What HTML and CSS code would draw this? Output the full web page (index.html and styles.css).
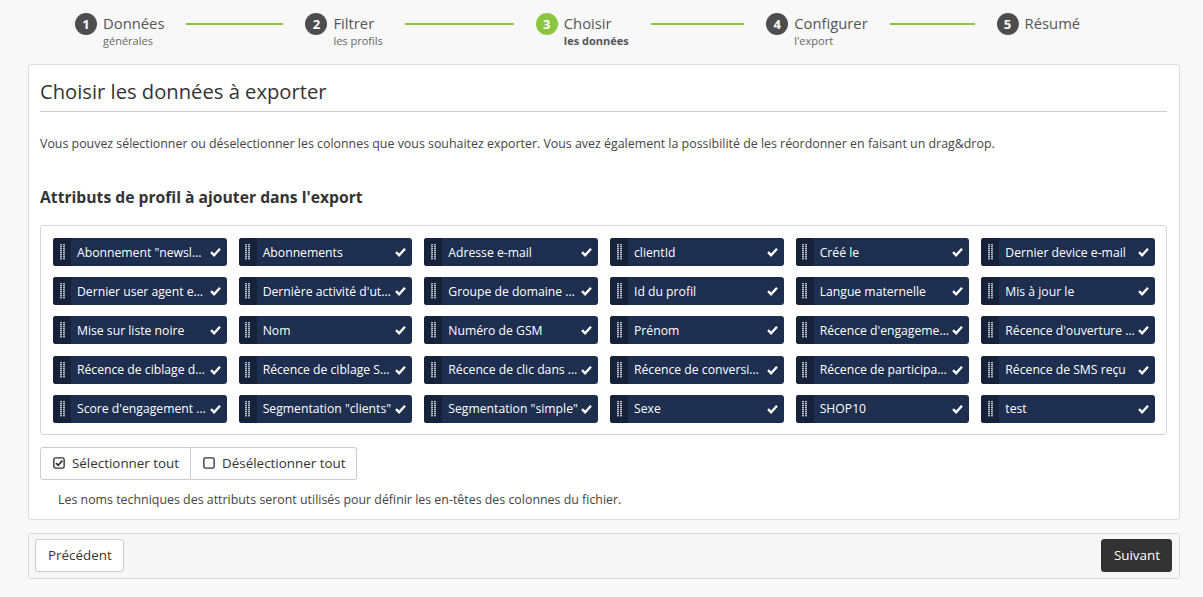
FILE: index.html
```html
<!DOCTYPE html>
<html lang="fr">
<head>
<meta charset="utf-8">
<title>Export</title>
<link rel="stylesheet" href="styles.css">
</head>
<body>
<ol class="stepper">
  <li class="step"><span class="num">1</span><span class="labels"><span class="t">Données</span><span class="s">générales</span></span><span class="line"></span></li>
  <li class="step"><span class="num">2</span><span class="labels"><span class="t">Filtrer</span><span class="s">les profils</span></span><span class="line"></span></li>
  <li class="step active"><span class="num">3</span><span class="labels"><span class="t">Choisir</span><span class="s">les données</span></span><span class="line"></span></li>
  <li class="step"><span class="num">4</span><span class="labels"><span class="t">Configurer</span><span class="s">l'export</span></span><span class="line"></span></li>
  <li class="step last"><span class="num">5</span><span class="labels"><span class="t">Résumé</span></span></li>
</ol>

<section class="panel">
  <h1 class="title">Choisir les données à exporter</h1>
  <p class="intro">Vous pouvez sélectionner ou déselectionner les colonnes que vous souhaitez exporter. Vous avez également la possibilité de les réordonner en faisant un drag&amp;drop.</p>
  <h2 class="subtitle">Attributs de profil à ajouter dans l'export</h2>
  <div class="chips" id="chips"></div>
  <div class="btn-group">
    <button class="btn"><svg class="ico" viewBox="0 0 14 14" width="12" height="12"><rect x="1" y="1" width="12" height="12" rx="2" fill="none" stroke="#333" stroke-width="1.6"/><path d="M3.5 7.2 L6 9.6 L11 4.2" fill="none" stroke="#333" stroke-width="2"/></svg>Sélectionner tout</button>
    <button class="btn"><svg class="ico" viewBox="0 0 14 14" width="12" height="12"><rect x="1" y="1" width="12" height="12" rx="2" fill="none" stroke="#333" stroke-width="1.6"/></svg>Désélectionner tout</button>
  </div>
  <p class="note">Les noms techniques des attributs seront utilisés pour définir les en-têtes des colonnes du fichier.</p>
</section>

<footer class="footer">
  <button class="btn">Précédent</button>
  <button class="btn dark">Suivant</button>
</footer>
<script src="app.js"></script>
</body>
</html>
```

FILE: app.js
```js
var items = [
  'Abonnement "newsletter"', 'Abonnements', 'Adresse e-mail', 'clientId', 'Créé le', 'Dernier device e-mail',
  'Dernier user agent e-mail', "Dernière activité d'utilisateur", 'Groupe de domaine e-mail', 'Id du profil', 'Langue maternelle', 'Mis à jour le',
  'Mise sur liste noire', 'Nom', 'Numéro de GSM', 'Prénom', "Récence d'engagement", "Récence d'ouverture e-mail",
  'Récence de ciblage de e-mail', 'Récence de ciblage SMS', 'Récence de clic dans e-mail', 'Récence de conversion', 'Récence de participation', 'Récence de SMS reçu',
  "Score d'engagement e-mail", 'Segmentation "clients"', 'Segmentation "simple"', 'Sexe', 'SHOP10', 'test'
];
var handle = '<svg width="5" height="16" viewBox="0 0 5 16"><g fill="#b9bec8">' +
  (function(){var s='';for(var r=0;r<8;r++){s+='<rect x="0" y="'+(r*2)+'" width="2" height="1.4"/><rect x="3" y="'+(r*2)+'" width="2" height="1.4"/>';}return s;})() +
  '</g></svg>';
var check = '<svg width="11" height="10" viewBox="0 0 11 10"><path d="M1 5.2 L4.1 8.2 L10 1.8" fill="none" stroke="#fff" stroke-width="2.4" stroke-linejoin="miter"/></svg>';
var html = '';
items.forEach(function(t){
  html += '<div class="chip"><span class="handle">' + handle + '</span><span class="label">' + t.replace(/&/g,'&amp;').replace(/</g,'&lt;') + '</span><span class="check">' + check + '</span></div>';
});
document.getElementById('chips').innerHTML = html;
```

FILE: styles.css
```css
* { box-sizing: border-box; }
html, body { margin: 0; padding: 0; }
body {
  background: #f8f8f8;
  font-family: "Open Sans", "Noto Sans", sans-serif;
  color: #333;
  padding: 0 23px 0 28px;
}
.stepper {
  list-style: none;
  margin: 0;
  padding: 13px 0 0 47px;
  height: 64px;
  display: flex;
}
.step {
  flex: 0 0 230.4px;
  display: flex;
  align-items: flex-start;
}
.step.last { flex: 0 0 auto; }
.num {
  width: 22px;
  height: 22px;
  border-radius: 50%;
  background: #4d4d4d;
  color: #fff;
  font-weight: 700;
  font-size: 13px;
  line-height: 22px;
  text-align: center;
  flex: none;
}
.step.active .num { background: #8cc63e; }
.labels {
  display: flex;
  flex-direction: column;
  margin-left: 6px;
  margin-top: 0;
}
.t { font-size: 14.8px; line-height: 20px; color: #555; }
.s { font-size: 11px; line-height: 15px; color: #666; }
.step.active .s { font-weight: 700; color: #555; }
.line {
  flex: 1;
  height: 2px;
  background: #8cc63e;
  margin: 10px 22px 0 22px;
}
.panel {
  background: #fff;
  border: 1px solid #dcdcdc;
  border-radius: 3px;
  padding: 12px 12px 10px 11px;
}
.title {
  margin: 0;
  font-size: 20.2px;
  font-weight: 400;
  line-height: 28px;
  color: #333;
  padding-bottom: 6px;
  border-bottom: 1px solid #ccc;
}
.intro {
  margin: 23px 0 0;
  font-size: 12.4px;
  line-height: 18px;
  color: #444;
}
.subtitle {
  margin: 33px 0 0;
  font-size: 15.7px;
  font-weight: 700;
  line-height: 22px;
  color: #333;
}
.chips {
  margin-top: 17px;
  border: 1px solid #d5d5d5;
  border-radius: 3px;
  padding: 12px 11px 11px 12px;
  display: grid;
  grid-template-columns: repeat(6, 1fr);
  column-gap: 12px;
  row-gap: 11.2px;
}
.chip {
  height: 28px;
  background: #1d2e4f;
  border-radius: 3px;
  display: flex;
  align-items: center;
  color: #fff;
  font-size: 12.2px;
  overflow: hidden;
}
.handle {
  width: 18px;
  height: 100%;
  background: #16223a;
  display: flex;
  align-items: center;
  justify-content: center;
  flex: none;
}
.label {
  flex: 1;
  min-width: 0;
  padding-left: 6px;
  padding-right: 3px;
  white-space: nowrap;
  overflow: hidden;
  text-overflow: ellipsis;
}
.check {
  flex: none;
  width: 17px;
  display: flex;
  align-items: center;
  justify-content: flex-start;
}
.btn-group {
  display: inline-flex;
  margin-top: 12px;
}
.btn {
  font-family: "Open Sans", "Noto Sans", sans-serif;
  font-size: 13.4px;
  color: #333;
  background: #fff;
  border: 1px solid #ccc;
  border-radius: 3px;
  height: 33px;
  padding: 0 11px 0 12px;
  display: inline-flex;
  align-items: center;
  cursor: pointer;
}
.btn-group .btn:first-child { border-radius: 3px 0 0 3px; }
.btn-group .btn + .btn { border-left: none; border-radius: 0 3px 3px 0; }
.ico { margin-right: 7px; }
.note {
  margin: 11px 0 0 18px;
  font-size: 12.4px;
  line-height: 18px;
  color: #444;
}
.footer {
  margin-top: 13px;
  background: #f7f7f7;
  border: 1px solid #d8d8d8;
  border-radius: 3px;
  padding: 5px 7px 6px 6px;
  display: flex;
  justify-content: space-between;
}
.btn.dark {
  background: #333;
  border-color: #333;
  color: #fff;
}
```
